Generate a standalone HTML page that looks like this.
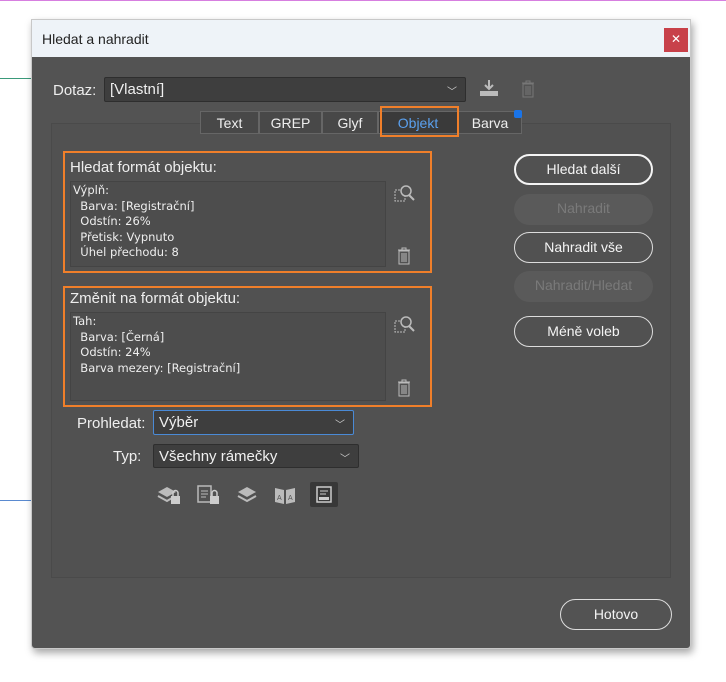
<!DOCTYPE html>
<html><head><meta charset="utf-8"><style>
*{box-sizing:border-box;margin:0;padding:0}
body{width:726px;height:682px;background:#fff;position:relative;overflow:hidden;font-family:"Liberation Sans","DejaVu Sans",sans-serif;color:#e8e8e8}
.a{position:absolute}
.dlg{left:31px;top:19px;width:660px;height:630px;background:#535353;border:1px solid #c8c8c8;border-radius:0 0 4px 4px;box-shadow:2px 4px 8px rgba(0,0,0,.35)}
.title{left:32px;top:20px;width:658px;height:37px;background:#eef3f8;color:#222;font-size:14px;padding:11px 0 0 10px}
.close{left:664px;top:28px;width:24px;height:24px;background:#c8414a;color:#fff;font-size:12px;text-align:center;line-height:23px}
.sel{background:#3e3e3e;border:1px solid #2e2e2e;border-radius:2px;font-size:14px;color:#f0f0f0;padding:3px 5px}
.chev{position:absolute;right:8px;top:5px;font-size:10px;color:#ccc}
.panel{left:51px;top:123px;width:620px;height:455px;border:1px solid #4a4a4a;background:#515151}
.tab{top:111px;height:23px;border:1px solid #666;background:#484848;font-size:14px;color:#eee;text-align:center;line-height:22px}
.ob{border:2px solid #f07f2a}
.ta{background:#4d4d4d;border:1px solid #444;font-family:"DejaVu Sans",sans-serif;font-size:11.5px;line-height:15.5px;color:#eee;padding:1px 2px;white-space:pre}
.lbl{font-size:14px;color:#eee}
.btn{left:514px;width:139px;height:31px;border:1.5px solid #ddd;border-radius:16px;text-align:center;font-size:14px;line-height:28px;color:#f4f4f4}
.dis{border:none;background:#5a5a5a;color:#7a7a7a}
</style></head><body>
<div class="a" style="left:0;top:0;width:726px;height:1px;background:#d77fe0"></div>
<div class="a" style="left:0;top:78px;width:32px;height:1px;background:#3a9a7a"></div>
<div class="a" style="left:0;top:500px;width:32px;height:1px;background:#5a8ad0"></div>
<div class="a dlg"></div>
<div class="a title">Hledat a nahradit</div>
<div class="a close">✕</div>
<div class="a lbl" style="left:53px;top:82px;font-size:15px">Dotaz:</div>
<div class="a sel" style="left:104px;top:77px;width:362px;height:25px;font-size:15px">[Vlastní]<span class="chev">﹀</span></div>
<svg class="a" style="left:478px;top:78px" width="22" height="20"><path d="M11 2v8M7 7l4 4 4-4" stroke="#bbb" stroke-width="2" fill="none"/><rect x="2" y="13" width="18" height="5" fill="#bbb"/></svg>
<svg class="a" style="left:520px;top:80px" width="16" height="18"><path d="M2 3h12M6 3V1h4v2M3 4h10v13H3z" stroke="#777" fill="none"/><path d="M6 6v9M8 6v9M10 6v9" stroke="#777"/></svg>
<div class="a panel"></div>
<div class="a tab" style="left:200px;width:59px">Text</div>
<div class="a tab" style="left:259px;width:63px">GREP</div>
<div class="a tab" style="left:322px;width:56px">Glyf</div>
<div class="a tab" style="left:378px;width:80px;background:#3a3a3a;color:#5aa0ee">Objekt</div>
<div class="a tab" style="left:458px;width:64px">Barva</div>
<div class="a" style="left:514px;top:110px;width:8px;height:8px;background:#1a74e8;border-radius:2px"></div>
<div class="a ob" style="left:380px;top:106px;width:79px;height:31px"></div>
<div class="a ob" style="left:63px;top:151px;width:369px;height:122px"></div>
<div class="a lbl" style="left:70px;top:159px;font-size:15px">Hledat formát objektu:</div>
<div class="a ta" style="left:70px;top:181px;width:316px;height:86px">Výplň:
  Barva: [Registrační]
  Odstín: 26%
  Přetisk: Vypnuto
  Úhel přechodu: 8</div>
<div class="a ob" style="left:63px;top:286px;width:369px;height:121px"></div>
<div class="a lbl" style="left:70px;top:290px;font-size:15px">Změnit na formát objektu:</div>
<div class="a ta" style="left:70px;top:312px;width:316px;height:89px">Tah:
  Barva: [Černá]
  Odstín: 24%
  Barva mezery: [Registrační]</div>
<svg class="a" style="left:393px;top:184px" width="22" height="20"><rect x="2" y="6" width="10" height="11" stroke="#bbb" fill="none" stroke-dasharray="2 1"/><circle cx="13" cy="7" r="5" stroke="#bbb" stroke-width="1.5" fill="#535353"/><path d="M16 11l5 5" stroke="#bbb" stroke-width="2"/></svg>
<svg class="a" style="left:393px;top:315px" width="22" height="20"><rect x="2" y="6" width="10" height="11" stroke="#bbb" fill="none" stroke-dasharray="2 1"/><circle cx="13" cy="7" r="5" stroke="#bbb" stroke-width="1.5" fill="#535353"/><path d="M16 11l5 5" stroke="#bbb" stroke-width="2"/></svg>
<svg class="a" style="left:396px;top:247px" width="16" height="18"><path d="M2 3h12M6 3V1h4v2M3 4h10v13H3z" stroke="#bbb" fill="none"/><path d="M6 6v9M8 6v9M10 6v9" stroke="#bbb"/></svg>
<svg class="a" style="left:396px;top:379px" width="16" height="18"><path d="M2 3h12M6 3V1h4v2M3 4h10v13H3z" stroke="#bbb" fill="none"/><path d="M6 6v9M8 6v9M10 6v9" stroke="#bbb"/></svg>
<div class="a lbl" style="left:77px;top:415px;font-size:15px">Prohledat:</div>
<div class="a sel" style="left:153px;top:410px;width:201px;height:25px;border-color:#4a8ad6;font-size:15px">Výběr<span class="chev">﹀</span></div>
<div class="a lbl" style="left:113px;top:448px;font-size:15px">Typ:</div>
<div class="a sel" style="left:153px;top:444px;width:206px;height:24px;font-size:15px">Všechny rámečky<span class="chev">﹀</span></div>
<svg class="a" style="left:156px;top:484px" width="26" height="22"><path d="M2 8l9-5 9 5-9 5z" fill="#bbb"/><path d="M2 12l9 5 5-3" stroke="#bbb" stroke-width="2" fill="none"/><rect x="15" y="12" width="9" height="8" fill="#ccc"/><path d="M17 12V9a2.5 2.5 0 015 0v3" stroke="#ccc" stroke-width="1.5" fill="none"/></svg>
<svg class="a" style="left:196px;top:484px" width="26" height="22"><rect x="2" y="2" width="13" height="16" stroke="#bbb" stroke-width="1.5" fill="none"/><path d="M5 7h7M5 10h7M5 13h5" stroke="#bbb"/><rect x="14" y="12" width="9" height="8" fill="#ccc"/><path d="M16 12V9a2.5 2.5 0 015 0v3" stroke="#ccc" stroke-width="1.5" fill="none"/></svg>
<svg class="a" style="left:236px;top:485px" width="22" height="18"><path d="M2 7l9-5 9 5-9 5z" fill="#bbb"/><path d="M2 11l9 5 9-5" stroke="#bbb" stroke-width="2" fill="none"/></svg>
<svg class="a" style="left:273px;top:484px" width="24" height="22"><path d="M2 4l9 2v14l-9-2zM22 4l-9 2v14l9-2z" fill="#bbb"/><text x="4" y="16" font-size="7" fill="#535353" font-family="Liberation Sans">A</text><text x="15" y="16" font-size="7" fill="#535353" font-family="Liberation Sans">A</text></svg>
<div class="a" style="left:310px;top:482px;width:28px;height:25px;background:#383838;border-radius:2px"></div>
<svg class="a" style="left:315px;top:485px" width="18" height="19"><rect x="2" y="2" width="14" height="15" stroke="#ccc" stroke-width="1.5" fill="none"/><path d="M5 6h8M5 9h6" stroke="#ccc"/><rect x="4" y="12" width="10" height="3" fill="#ccc"/></svg>
<div class="a btn" style="top:154px;border:2.5px solid #f4f4f4;line-height:27px">Hledat další</div>
<div class="a btn dis" style="top:194px">Nahradit</div>
<div class="a btn" style="top:232px">Nahradit vše</div>
<div class="a btn dis" style="top:271px">Nahradit/Hledat</div>
<div class="a btn" style="top:316px">Méně voleb</div>
<div class="a btn" style="left:560px;top:599px;width:112px;height:31px">Hotovo</div>
</body></html>
